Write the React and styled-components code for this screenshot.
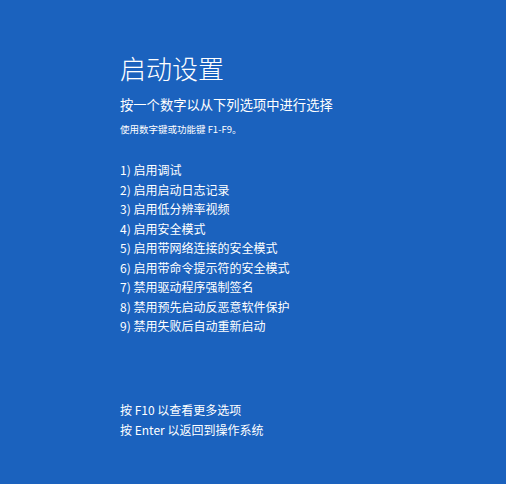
import React from 'react';
import styled, {createGlobalStyle} from 'styled-components';

const GlobalStyle = createGlobalStyle`
  html, body {
    margin: 0;
    padding: 0;
    background: #1b62be;
  }
`;

const Screen = styled.div`
  width: 506px;
  height: 484px;
  box-sizing: border-box;
  background: #1b62be;
  color: #fff;
  font-family: "Noto Sans CJK SC", "Noto Sans", sans-serif;
  padding: 50px 0 0 120px;
  display: flex;
  flex-direction: column;
`;

const Title = styled.h1`
  margin: 0;
  font-size: 26px;
  font-weight: 300;
  line-height: 36px;
`;

const Prompt = styled.div`
  margin-top: 10px;
  font-size: 13.3px;
  line-height: 18px;
`;

const Hint = styled.div`
  margin-top: 8px;
  font-size: 9.5px;
  line-height: 14px;
`;

const List = styled.ol`
  list-style: none;
  margin: 26px 0 0;
  padding: 0;
  display: flex;
  flex-direction: column;
  gap: 3px;
`;

const Item = styled.li`
  font-size: 12px;
  line-height: 16.5px;
`;

const Footer = styled.div`
  margin-top: 66px;
  display: flex;
  flex-direction: column;
  gap: 3px;
  font-size: 12px;
  line-height: 17px;
`;

const options = [
  '启用调试',
  '启用启动日志记录',
  '启用低分辨率视频',
  '启用安全模式',
  '启用带网络连接的安全模式',
  '启用带命令提示符的安全模式',
  '禁用驱动程序强制签名',
  '禁用预先启动反恶意软件保护',
  '禁用失败后自动重新启动'
];

export default function App() {
  return (
    <>
      <GlobalStyle />
      <Screen>
        <Title>启动设置</Title>
        <Prompt>按一个数字以从下列选项中进行选择</Prompt>
        <Hint>使用数字键或功能键 F1-F9。</Hint>
        <List>
          {options.map((o, i) => (
            <Item key={i}>{i + 1}) {o}</Item>
          ))}
        </List>
        <Footer>
          <div>按 F10 以查看更多选项</div>
          <div>按 Enter 以返回到操作系统</div>
        </Footer>
      </Screen>
    </>
  );
}
